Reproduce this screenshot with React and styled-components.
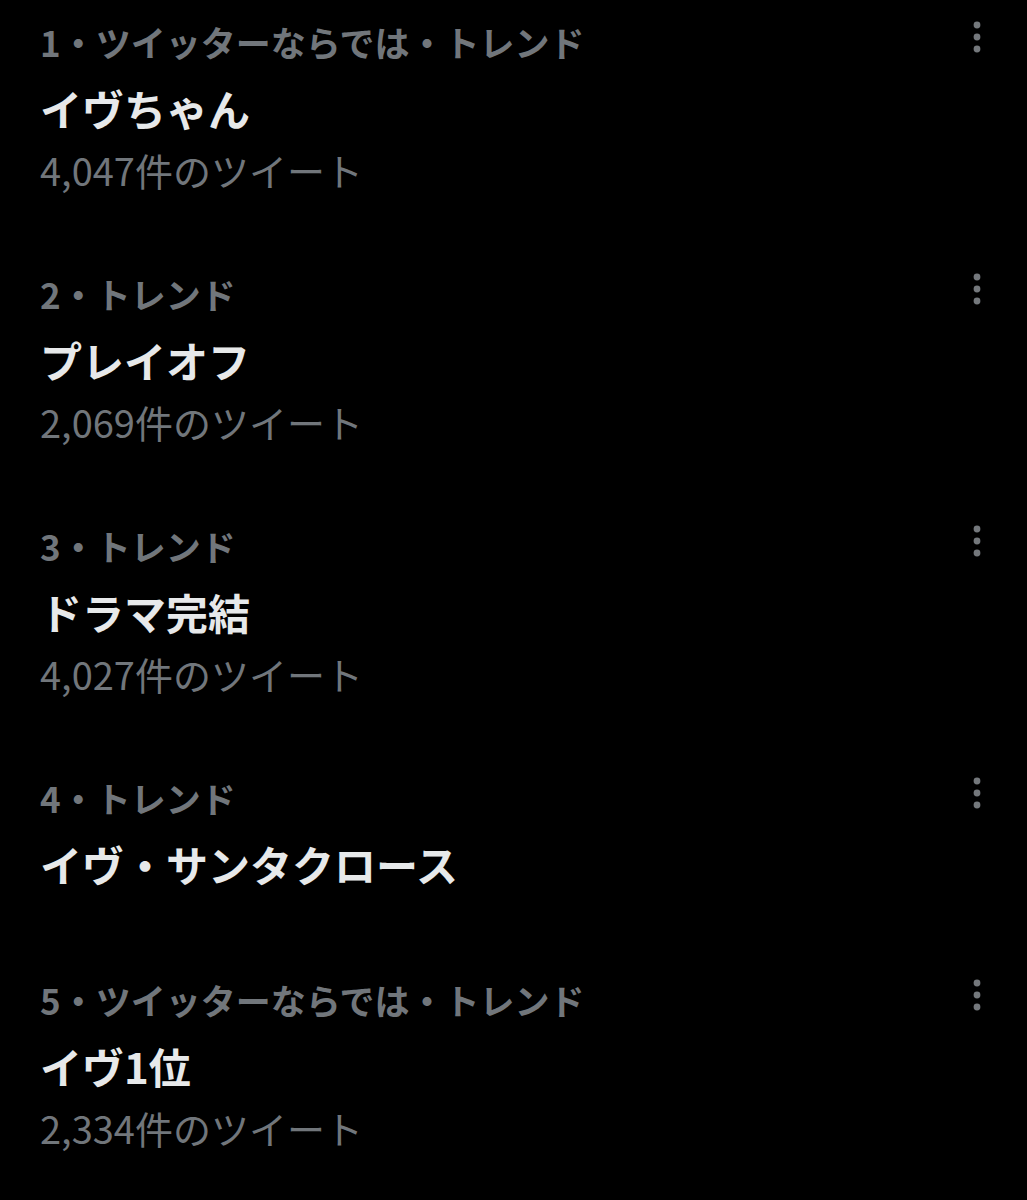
import React from "react";
import styled, { createGlobalStyle } from "styled-components";

const GlobalStyle = createGlobalStyle`
  html, body {
    margin: 0;
    padding: 0;
    background: #000;
  }
  body {
    font-family: "Noto Sans CJK JP", "Noto Sans", sans-serif;
    -webkit-font-smoothing: antialiased;
  }
`;

const List = styled.main`
  display: flex;
  flex-direction: column;
  background: #000;
  min-height: 1200px;
`;

const Trend = styled.article`
  display: flex;
  flex-direction: column;
  padding: 20px 43px ${(p) => (p.$hasCount ? "60px" : "68px")} 40px;
`;

const Header = styled.div`
  display: flex;
  justify-content: space-between;
  align-items: flex-start;
`;

const Context = styled.span`
  font-size: 35px;
  line-height: 44px;
  font-weight: 700;
  color: #71767b;
  white-space: nowrap;
`;

const Title = styled.h2`
  margin: 18px 0 0;
  font-size: 42px;
  line-height: 52px;
  font-weight: 700;
  color: #e7e9ea;
  white-space: nowrap;
`;

const Count = styled.div`
  margin-top: 14px;
  font-size: 38px;
  line-height: 44px;
  font-weight: 400;
  color: #71767b;
  white-space: nowrap;
`;

const MoreButton = styled.button`
  display: flex;
  align-items: center;
  justify-content: center;
  width: 14px;
  height: 34px;
  padding: 0;
  border: 0;
  background: transparent;
  color: #74787c;
`;

const MoreIcon = () => (
  <svg width="14" height="34" viewBox="0 0 14 34" fill="currentColor">
    <circle cx="7" cy="5" r="3.4" />
    <circle cx="7" cy="17" r="3.4" />
    <circle cx="7" cy="29" r="3.4" />
  </svg>
);

const trends = [
  { rank: 1, context: "ツイッターならでは・トレンド", title: "イヴちゃん", count: "4,047" },
  { rank: 2, context: "トレンド", title: "プレイオフ", count: "2,069" },
  { rank: 3, context: "トレンド", title: "ドラマ完結", count: "4,027" },
  { rank: 4, context: "トレンド", title: "イヴ・サンタクロース" },
  { rank: 5, context: "ツイッターならでは・トレンド", title: "イヴ1位", count: "2,334" },
];

export default function App() {
  return (
    <>
      <GlobalStyle />
      <List>
        {trends.map((t) => (
          <Trend key={t.rank} $hasCount={Boolean(t.count)}>
            <Header>
              <Context>
                {t.rank}・{t.context}
              </Context>
              <MoreButton aria-label="その他">
                <MoreIcon />
              </MoreButton>
            </Header>
            <Title>{t.title}</Title>
            {t.count && <Count>{t.count}件のツイート</Count>}
          </Trend>
        ))}
      </List>
    </>
  );
}
